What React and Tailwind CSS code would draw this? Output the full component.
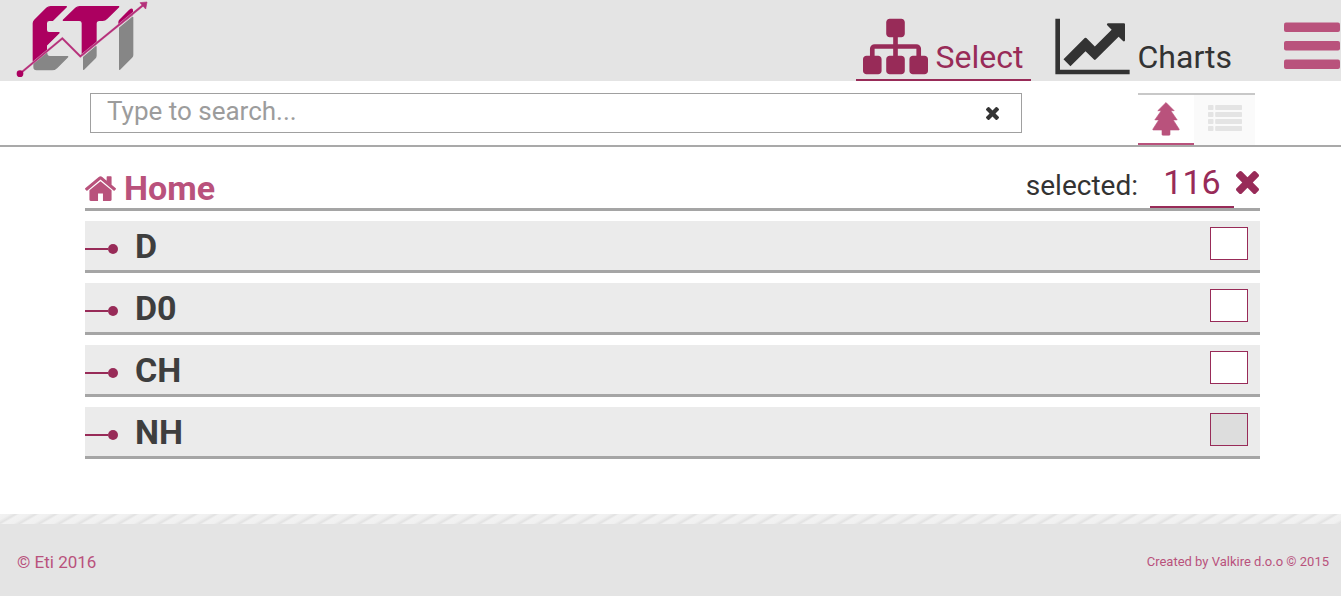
import { useState } from "react";

const items = [
  { id: "d", name: "D" },
  { id: "d0", name: "D0" },
  { id: "ch", name: "CH" },
  { id: "nh", name: "NH", partial: true },
];

function Logo() {
  return (
    <svg className="h-20 w-[135px]" viewBox="45 0 405 240" role="img" aria-label="Eti">
      <g fill="#868686" stroke="#868686" strokeWidth="4" strokeLinejoin="round">
        <path d="M102 190 140 159Q140 170 150 170H203L170 203Q164 209 156 209H110Q102 209 102 201Z" />
        <path d="M251 172 288 140V167Q288 171 285 174L251 208Z" />
        <path d="M359 84 398 52V165Q398 169 395 172L359 208Z" />
      </g>
      <g fill="#ac0060" stroke="#ac0060" strokeWidth="4" strokeLinejoin="round">
        <path d="M100 184V70Q100 65 104 61L140 25Q145 20 152 20H199L158 61H148Q139 61 139 70V90Q139 98 147 98H177L139 136V152Z" />
        <path d="M190 61 227 25Q232 20 239 20H356L321 55Q315 61 308 61H298Q288 61 288 71V132L247 166V70Q247 61 238 61Z" />
        <path d="M357 76V66Q357 63 360 60L389 31Q397 24 397 31V44Z" />
      </g>
      <path d="M60 221 187 115 241 169 430 15" fill="none" stroke="#d9a3c0" strokeWidth="7" />
      <path d="M60 221 187 115 241 169 430 15" fill="none" stroke="#b5307a" strokeWidth="5" />
      <path d="M420 8 441 6 437 27Z" fill="#b5307a" stroke="#b5307a" strokeWidth="2" />
      <circle cx="60" cy="221" r="10" fill="#ac0060" />
    </svg>
  );
}

function SitemapIcon() {
  return (
    <svg className="h-[65px] w-[65px]" viewBox="0 0 1792 1792" fill="currentColor" aria-hidden="true">
      <path d="M1792 1248v320q0 40-28 68t-68 28h-320q-40 0-68-28t-28-68v-320q0-40 28-68t68-28h96v-192h-512v192h96q40 0 68 28t28 68v320q0 40-28 68t-68 28h-320q-40 0-68-28t-28-68v-320q0-40 28-68t68-28h96v-192h-512v192h96q40 0 68 28t28 68v320q0 40-28 68t-68 28h-320q-40 0-68-28t-28-68v-320q0-40 28-68t68-28h96v-192q0-52 38-90t90-38h512v-192h-96q-40 0-68-28t-28-68v-320q0-40 28-68t68-28h320q40 0 68 28t28 68v320q0 40-28 68t-68 28h-96v192h512q52 0 90 38t38 90v192h96q40 0 68 28t28 68z" />
    </svg>
  );
}

function LineChartIcon() {
  return (
    <svg className="h-[65px] w-[75px]" viewBox="0 0 2048 1792" fill="currentColor" aria-hidden="true">
      <path d="M2048 1536v128h-2048v-1536h128v1408h1920zm-128-1248v435q0 21-19.5 29.5t-35.5-7.5l-121-121-633 633q-10 10-23 10t-23-10l-233-233-416 416-192-192 585-585q10-10 23-10t23 10l233 233 464-464-121-121q-16-16-7.5-35.5t29.5-19.5h435q14 0 23 9t9 23z" />
    </svg>
  );
}

function TimesIcon({ className }) {
  return (
    <svg className={className} viewBox="302 366 1188 1188" fill="currentColor" aria-hidden="true">
      <path d="M1490 1322q0 40-28 68l-136 136q-28 28-68 28t-68-28l-294-294-294 294q-28 28-68 28t-68-28l-136-136q-28-28-28-68t28-68l294-294-294-294q-28-28-28-68t28-68l136-136q28-28 68-28t68 28l294 294 294-294q28-28 68-28t68 28l136 136q28 28 28 68t-28 68l-294 294 294 294q28 28 28 68z" />
    </svg>
  );
}

function HomeIcon() {
  return (
    <svg className="h-[25px] w-[31px]" viewBox="90 240 1612 1300" fill="currentColor" aria-hidden="true">
      <path d="M1472 992v480q0 26-19 45t-45 19h-384v-384h-256v384h-384q-26 0-45-19t-19-45v-480q0-1 .5-3t.5-3l575-474 575 474q1 2 1 6zm223-69l-62 74q-8 9-21 11h-3q-13 0-21-7l-692-577-692 577q-12 8-24 7-13-2-21-11l-62-74q-8-10-7-23.5t11-21.5l719-599q32-26 76-26t76 26l244 204v-195q0-14 9-23t23-9h192q14 0 23 9t9 23v408l219 182q10 8 11 21.5t-7 23.5z" />
    </svg>
  );
}

function BarsIcon() {
  return (
    <svg className="h-[47px] w-14" viewBox="0 0 56 47" fill="currentColor" aria-hidden="true">
      <rect y=".5" width="56" height="9.5" rx="2" />
      <rect y="19" width="56" height="9.5" rx="2" />
      <rect y="37.5" width="56" height="9.5" rx="2" />
    </svg>
  );
}

function TreeIcon() {
  return (
    <svg className="h-[34px] w-7" viewBox="0 0 28 34" fill="currentColor" aria-hidden="true">
      <path
        d="M14 .5 22.2 8.7H18.8L25.2 17.9H21.2L27.2 27.2Q27.4 28 26.6 28H18V32.4Q18 33.2 17.2 33.2H10.8Q10 33.2 10 32.4V28H1.4Q.6 28 .8 27.2L6.8 17.9H2.8L9.2 8.7H5.8Z"
        stroke="currentColor"
        strokeWidth=".6"
        strokeLinejoin="round"
      />
    </svg>
  );
}

function ListIcon() {
  return (
    <svg className="h-[26px] w-[34px]" viewBox="0 0 34 26" fill="currentColor" aria-hidden="true">
      {[0, 7, 14, 21].map((y) => (
        <g key={y}>
          <rect y={y} width="5.5" height="5" rx=".8" />
          <rect x="7.2" y={y} width="26.8" height="5" rx=".8" />
        </g>
      ))}
    </svg>
  );
}

function Row({ item, checked, onToggle }) {
  return (
    <li className="flex h-[52px] items-center border-b-[3px] border-[#a5a5a5] bg-[#ebebeb] pr-3">
      <span className="flex w-[33px] items-center pt-1.5" aria-hidden="true">
        <span className="h-0.5 flex-1 bg-[#982b58]" />
        <span className="h-2.5 w-2.5 rounded-full bg-[#982b58]" />
      </span>
      <label
        htmlFor={item.id}
        className="flex-1 pl-[17px] text-[34px] leading-10 font-bold text-[#3e3e3e]"
      >
        {item.name}
      </label>
      <input
        id={item.id}
        type="checkbox"
        checked={checked}
        onChange={onToggle}
        ref={(el) => {
          if (el) el.indeterminate = Boolean(item.partial);
        }}
        className="mb-1 h-[33px] w-[38px] appearance-none border border-[#982b58] bg-white checked:bg-[#982b58] indeterminate:bg-[#dddddd]"
      />
    </li>
  );
}

export default function App() {
  const [query, setQuery] = useState("");
  const [checked, setChecked] = useState({});

  const toggle = (id) => setChecked((prev) => ({ ...prev, [id]: !prev[id] }));

  return (
    <div className="flex min-h-screen flex-col bg-white font-['Roboto',sans-serif] text-[#333333]">
      {/* Header */}
      <header className="flex h-[81px] items-start justify-between bg-[#e4e4e4] pl-[15px]">
        <a href="#home">
          <Logo />
        </a>
        <div className="flex h-full items-start">
          <nav className="flex h-full gap-4 text-[32px] leading-11">
            <a
              href="#select"
              className="flex items-end gap-2 border-b-2 border-[#982b58] px-[7px] text-[#982b58]"
            >
              <SitemapIcon />
              <span>Select</span>
            </a>
            <a href="#charts" className="flex items-end gap-2 border-b-2 border-transparent px-2">
              <LineChartIcon />
              <span>Charts</span>
            </a>
          </nav>
          <button type="button" aria-label="Menu" className="mt-[22px] mr-px ml-11 text-[#b9527c]">
            <BarsIcon />
          </button>
        </div>
      </header>

      {/* Search bar */}
      <div className="flex h-[66px] items-start border-b-2 border-[#a9a9a9] pt-3 pr-[86px] pl-[90px]">
        <div className="flex h-10 flex-1 items-center border border-[#a0a0a0] pr-[22px] pl-4">
          <input
            type="text"
            aria-label="Search"
            placeholder="Type to search..."
            value={query}
            onChange={(e) => setQuery(e.target.value)}
            className="min-w-0 flex-1 pb-1 text-[26px] leading-8 outline-none placeholder:text-[#9c9c9c]"
          />
          <button type="button" aria-label="Clear search" onClick={() => setQuery("")}>
            <TimesIcon className="h-[13px] w-[13px]" />
          </button>
        </div>
        <div className="ml-[116px] flex h-[52px] border-t-2 border-[#c8c8c8]">
          <button
            type="button"
            aria-label="Tree view"
            className="flex w-14 items-center justify-center border-b-2 border-[#b9527c] text-[#b9527c]"
          >
            <TreeIcon />
          </button>
          <button
            type="button"
            aria-label="List view"
            className="flex w-[61px] items-center justify-center bg-[#fafafa] pb-1 text-[#e4e4e4]"
          >
            <ListIcon />
          </button>
        </div>
      </div>

      <main className="flex-1 pr-[81px] pl-[85px]">
        {/* Breadcrumb and selection count */}
        <div className="flex h-16 items-end justify-between border-b-[3px] border-[#a5a5a5]">
          <h1 className="text-[34px] leading-10 font-bold text-[#b9527c]">
            <a href="#root" className="flex items-center gap-2">
              <HomeIcon />
              Home
            </a>
          </h1>
          <div className="flex items-end pr-px">
            <span className="pr-3 pb-1 text-[28px] leading-9">selected:</span>
            <a
              href="#selected"
              className="w-[84px] border-b-2 border-[#982b58] pb-1 text-center text-[34px] leading-10 text-[#982b58]"
            >
              116
            </a>
            <button type="button" aria-label="Clear selection" className="mb-3.5 pl-0.5 text-[#982b58]">
              <TimesIcon className="h-[23px] w-[23px]" />
            </button>
          </div>
        </div>

        <ul className="mt-2.5 flex flex-col gap-2.5">
          {items.map((item) => (
            <Row
              key={item.id}
              item={item}
              checked={Boolean(checked[item.id])}
              onToggle={() => toggle(item.id)}
            />
          ))}
        </ul>
      </main>

      {/* Footer */}
      <footer className="text-[#b9527c]">
        <div className="h-2.5 bg-[repeating-linear-gradient(150deg,#f2f2f2_0px,#f0f0f0_5px,#e2e2e2_8px,#f2f2f2_10px)]" />
        <div className="flex h-[72px] items-center justify-between bg-[#e4e4e4] pt-1 pr-3 pl-[17px]">
          <span className="text-[17px] leading-6">© Eti 2016</span>
          <span className="text-[13px] leading-6">Created by Valkire d.o.o © 2015</span>
        </div>
      </footer>
    </div>
  );
}
